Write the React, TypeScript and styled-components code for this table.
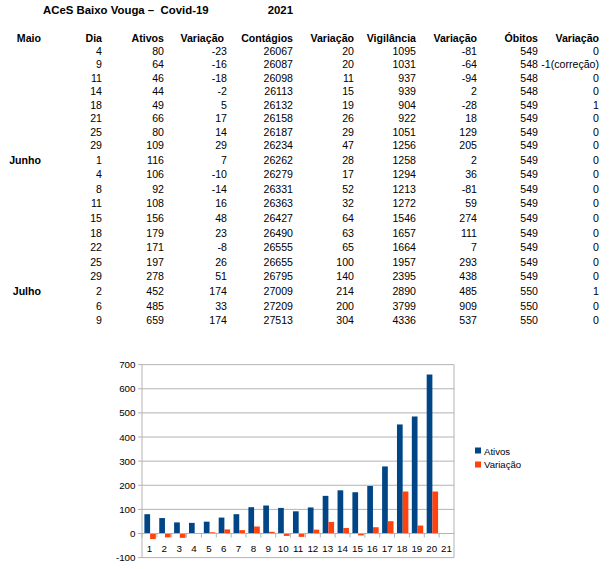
import styled, { createGlobalStyle } from 'styled-components';
import { ReactElement } from 'react';

const GlobalStyle = createGlobalStyle`
  body {
    margin: 0;
    background: #fff;
    color: #000;
    font-family: "Liberation Sans", Arial, sans-serif;
  }
`;

const COLS = '41px 61px 62px 63px 66px 61px 62px 61px 61px 61px';

const Sheet = styled.div`
  width: 615px;
`;

const Row = styled.div<{ $h: number }>`
  display: grid;
  grid-template-columns: ${COLS};
  height: ${(p) => p.$h}px;
  line-height: ${(p) => p.$h}px;
  font-size: 10.6px;
  white-space: nowrap;
`;

const TitleRow = styled(Row)`
  margin-bottom: 10px;
  font-size: 11.4px;
  font-weight: bold;
`;

const Title = styled.div`
  grid-column: 2 / span 3;
  padding-left: 2px;
  white-space: pre;
`;

const Cell = styled.div<{ $bold?: boolean; $shift?: number }>`
  text-align: right;
  font-weight: ${(p) => (p.$bold ? 'bold' : 'normal')};
  padding-right: ${(p) => p.$shift ?? 0}px;
`;

const ChartSvg = styled.svg`
  display: block;
  margin-top: 12px;
`;

type Rec = [string, number, number, number, number, number, number, number, number, string];

const rows: Rec[] = [
  ['', 4, 80, -23, 26067, 20, 1095, -81, 549, '0'],
  ['', 9, 64, -16, 26087, 20, 1031, -64, 548, '-1(correção)'],
  ['', 11, 46, -18, 26098, 11, 937, -94, 548, '0'],
  ['', 14, 44, -2, 26113, 15, 939, 2, 548, '0'],
  ['', 18, 49, 5, 26132, 19, 904, -28, 549, '1'],
  ['', 21, 66, 17, 26158, 26, 922, 18, 549, '0'],
  ['', 25, 80, 14, 26187, 29, 1051, 129, 549, '0'],
  ['', 29, 109, 29, 26234, 47, 1256, 205, 549, '0'],
  ['Junho', 1, 116, 7, 26262, 28, 1258, 2, 549, '0'],
  ['', 4, 106, -10, 26279, 17, 1294, 36, 549, '0'],
  ['', 8, 92, -14, 26331, 52, 1213, -81, 549, '0'],
  ['', 11, 108, 16, 26363, 32, 1272, 59, 549, '0'],
  ['', 15, 156, 48, 26427, 64, 1546, 274, 549, '0'],
  ['', 18, 179, 23, 26490, 63, 1657, 111, 549, '0'],
  ['', 22, 171, -8, 26555, 65, 1664, 7, 549, '0'],
  ['', 25, 197, 26, 26655, 100, 1957, 293, 549, '0'],
  ['', 29, 278, 51, 26795, 140, 2395, 438, 549, '0'],
  ['Julho', 2, 452, 174, 27009, 214, 2890, 485, 550, '1'],
  ['', 6, 485, 33, 27209, 200, 3799, 909, 550, '0'],
  ['', 9, 659, 174, 27513, 304, 4336, 537, 550, '0'],
];

const headers = ['Dia', 'Ativos', 'Variação', 'Contágios', 'Variação', 'Vigilância', 'Variação', 'Óbitos', 'Variação'];

// chart geometry, in page coordinates (viewBox starts at y=340)
const X0 = 142;
const X1 = 454;
const ZERO = 533.5;
const K = 24.125 / 100;
const CW = (X1 - X0) / 21;
const BW = 5.7;
const BLUE = '#004586';
const ORANGE = '#ff420e';
const GRID = '#b3b3b3';
const FONT = 'Liberation Sans, Arial, sans-serif';

const yOf = (v: number) => ZERO - v * K;

function Bar({ x, v, color }: { x: number; v: number; color: string }): ReactElement {
  const y = v >= 0 ? yOf(v) : ZERO;
  return <rect x={x} y={y} width={BW} height={Math.abs(v) * K} fill={color} />;
}

function Chart(): ReactElement {
  const ticks = [-100, 0, 100, 200, 300, 400, 500, 600, 700];
  const cats = Array.from({ length: 21 }, (_, i) => i);
  return (
    <ChartSvg width={615} height={229} viewBox="0 340 615 229">
      {ticks.map((t) => (
        <g key={t}>
          <line x1={138} x2={X1} y1={yOf(t)} y2={yOf(t)} stroke={GRID} strokeWidth={1} />
          <text x={135.5} y={yOf(t)} textAnchor="end" dominantBaseline="central" fontSize={9.8} fontFamily={FONT}>
            {t}
          </text>
        </g>
      ))}
      {rows.map((r, i) => (
        <g key={i}>
          <Bar x={X0 + i * CW + 2.4} v={r[2]} color={BLUE} />
          <Bar x={X0 + i * CW + 2.4 + BW} v={r[3]} color={ORANGE} />
        </g>
      ))}
      <line x1={X0} x2={X0} y1={yOf(700)} y2={yOf(-100)} stroke={GRID} strokeWidth={1} />
      <line x1={X1} x2={X1} y1={yOf(700)} y2={yOf(-100)} stroke={GRID} strokeWidth={1} />
      <line x1={X0} x2={X1} y1={ZERO} y2={ZERO} stroke={GRID} strokeWidth={1} />
      {cats.map((i) => (
        <g key={i}>
          <line x1={X0 + i * CW} x2={X0 + i * CW} y1={ZERO} y2={ZERO + 4} stroke={GRID} strokeWidth={1} />
          <text
            x={X0 + i * CW + CW / 2}
            y={548}
            textAnchor="middle"
            dominantBaseline="central"
            fontSize={9.8}
            fontFamily={FONT}
          >
            {i + 1}
          </text>
        </g>
      ))}
      <rect x={475} y={447.5} width={6} height={6} fill={BLUE} />
      <text x={484} y={451} dominantBaseline="central" fontSize={9.6} fontFamily={FONT}>
        Ativos
      </text>
      <rect x={475} y={461.5} width={6} height={6} fill={ORANGE} />
      <text x={484} y={464.5} dominantBaseline="central" fontSize={9.6} fontFamily={FONT}>
        Variação
      </text>
    </ChartSvg>
  );
}

export default function App(): ReactElement {
  return (
    <Sheet>
      <GlobalStyle />
      <TitleRow $h={21}>
        <div />
        <Title>{'ACeS Baixo Vouga –  Covid-19'}</Title>
        <Cell $bold>2021</Cell>
      </TitleRow>
      <Row $h={14}>
        <Cell $bold>Maio</Cell>
        {headers.map((h, i) => (
          <Cell key={i} $bold $shift={i === 2 ? 3 : 0}>
            {h}
          </Cell>
        ))}
      </Row>
      {rows.map((r, i) => (
        <Row key={i} $h={i < 8 ? 13.46 : 14.6}>
          <Cell $bold>{r[0]}</Cell>
          {r.slice(1).map((v, j) => (
            <Cell key={j}>{v}</Cell>
          ))}
        </Row>
      ))}
      <Chart />
    </Sheet>
  );
}
